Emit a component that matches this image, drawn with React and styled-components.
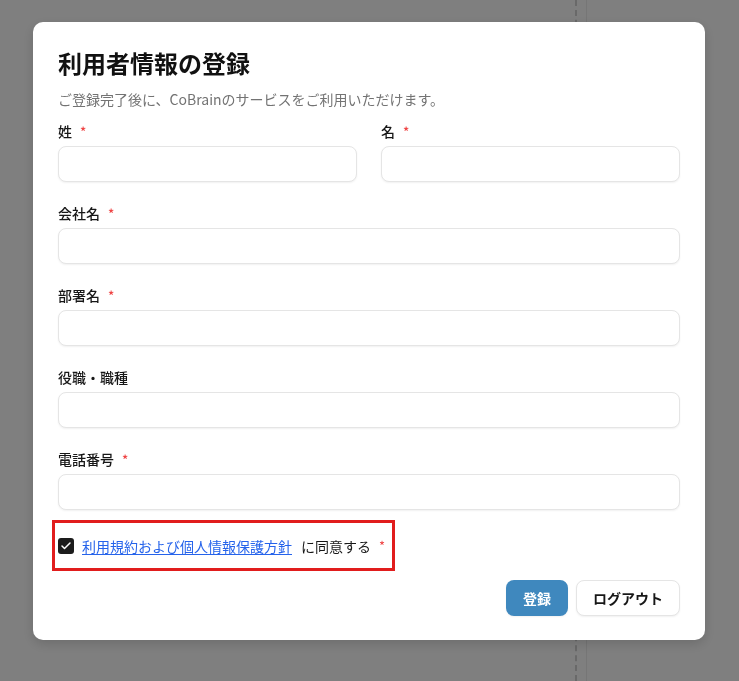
import styled, { createGlobalStyle } from "styled-components";

const GlobalStyle = createGlobalStyle`
html, body {
    margin: 0;
    padding: 0;
    background: #fff;
}
body {
    font-family: "Noto Sans CJK JP", "Noto Sans", "Liberation Sans", sans-serif;
    color: #171717;
}
* { box-sizing: border-box; }
`

const Behind = styled.div`
display: flex;
height: 100vh;
`
const Workspace = styled.div`
width: 577px;
border-right: 2px dashed #d2d2d2;
`
const SidePane = styled.div`
flex: 1;
margin-left: 9px;
border-left: 1px solid #ececec;
background: #fefefe;
`

const Backdrop = styled.div`
position: fixed;
inset: 0;
background: rgba(0, 0, 0, 0.5);
display: flex;
justify-content: center;
align-items: flex-start;
padding: 22px 1px 0 0;
`
const Modal = styled.div`
width: 672px;
background: #fff;
border-radius: 10px;
padding: 23px 25px 24px;
box-shadow: 0 4px 12px rgba(0, 0, 0, 0.15);
`
const Title = styled.h2`
margin: 0;
font-size: 24px;
line-height: 36px;
font-weight: 700;
color: #111;
`
const SubText = styled.p`
margin: 8px 0 12px;
font-size: 14px;
line-height: 20px;
color: #737373;
`
const Form = styled.div`
display: flex;
flex-direction: column;
gap: 21px;
`
const Row = styled.div`
display: grid;
grid-template-columns: 1fr 1fr;
gap: 24px;
`
const Field = styled.div`
display: flex;
flex-direction: column;
gap: 5px;
`
const Label = styled.label`
display: flex;
align-items: center;
height: 20px;
font-size: 14px;
font-weight: 500;
color: #171717;
`
const Required = styled.span`
color: #ef4444;
font-size: 13px;
line-height: 1;
margin-left: 8px;
`
const Input = styled.input`
display: block;
height: 36px;
width: 100%;
border: 1px solid #e5e5e5;
border-radius: 8px;
padding: 0 12px;
font-size: 14px;
font-family: inherit;
background: #fff;
box-shadow: 0 1px 2px rgba(0, 0, 0, 0.06);
outline: none;
`
const AgreeBox = styled.div`
display: inline-flex;
align-items: center;
align-self: flex-start;
height: 51px;
margin: 10px 0 0 -6px;
padding: 0 7px 0 3px;
border: 3px solid #e11d1d;
font-size: 14px;
line-height: 20px;
`
const Check = styled.span`
width: 16px;
height: 16px;
border-radius: 3px;
background: #1c1c1c;
display: inline-flex;
align-items: center;
justify-content: center;
margin-right: 8px;
`
const TermsLink = styled.a`
color: #2563eb;
text-decoration: underline;
text-underline-offset: 2px;
margin-right: 9px;
`
const Footer = styled.div`
display: flex;
justify-content: flex-end;
gap: 8px;
margin-top: 9px;
`
const Button = styled.button`
height: 36px;
padding: 0 16px;
border-radius: 8px;
font-family: inherit;
font-size: 14px;
font-weight: 700;
border: 1px solid ${p => p.$primary ? "transparent" : "#e5e5e5"};
background: ${p => p.$primary ? "#3f88be" : "#fff"};
color: ${p => p.$primary ? "#fff" : "#171717"};
box-shadow: 0 1px 2px rgba(0, 0, 0, 0.06);
`

function TextField({ label, required }) {
    return (
        <Field>
            <Label>{label}{required && <Required>*</Required>}</Label>
            <Input type="text" />
        </Field>
    );
}

export default function App() {
    return (
        <>
            <GlobalStyle />
            <Behind>
                <Workspace />
                <SidePane />
            </Behind>
            <Backdrop>
                <Modal>
                    <Title>利用者情報の登録</Title>
                    <SubText>ご登録完了後に、CoBrainのサービスをご利用いただけます。</SubText>
                    <Form>
                        <Row>
                            <TextField label="姓" required />
                            <TextField label="名" required />
                        </Row>
                        <TextField label="会社名" required />
                        <TextField label="部署名" required />
                        <TextField label="役職・職種" />
                        <TextField label="電話番号" required />
                    </Form>
                    <AgreeBox>
                        <Check>
                            <svg width="12" height="12" viewBox="0 0 24 24" fill="none" stroke="#fff" strokeWidth="3" strokeLinecap="round" strokeLinejoin="round">
                                <path d="M20 6 9 17l-5-5" />
                            </svg>
                        </Check>
                        <TermsLink href="#">利用規約および個人情報保護方針</TermsLink>
                        に同意する
                        <Required>*</Required>
                    </AgreeBox>
                    <Footer>
                        <Button $primary>登録</Button>
                        <Button>ログアウト</Button>
                    </Footer>
                </Modal>
            </Backdrop>
        </>
    );
}
